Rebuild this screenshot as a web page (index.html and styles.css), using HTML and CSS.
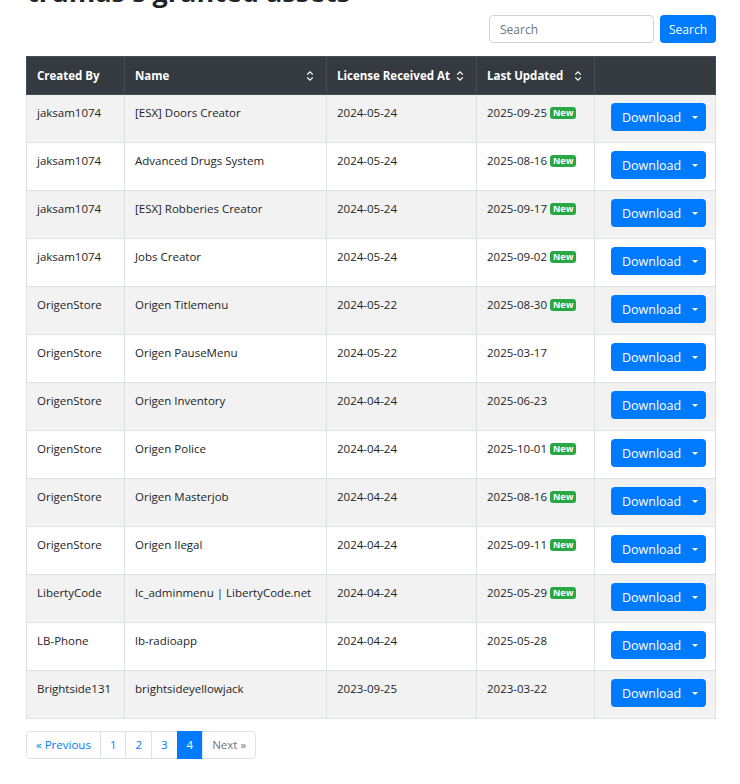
FILE: index.html
```html
<!DOCTYPE html>
<html>
	<head>
		<title>Granted assets</title>
		<link rel="stylesheet" href="styles.css">
	</head>
	<body>
		<div id="page">
			<h2 class="title">trumas's granted assets</h2>
			<form class="toolbar">
				<input type="text" class="search-input" placeholder="Search">
				<button type="button" class="btn">Search</button>
			</form>
			<table class="assets">
				<thead>
					<tr>
						<th class="col-author">Created By</th>
						<th class="col-name sortable">Name</th>
						<th class="col-received sortable">License Received At</th>
						<th class="col-updated sortable">Last Updated</th>
						<th class="col-action"></th>
					</tr>
				</thead>
				<tbody id="rows"></tbody>
			</table>
			<ul class="pagination">
				<li><a href="#">&laquo; Previous</a></li>
				<li><a href="#">1</a></li>
				<li><a href="#">2</a></li>
				<li><a href="#">3</a></li>
				<li class="active"><a href="#">4</a></li>
				<li class="disabled"><a href="#">Next &raquo;</a></li>
			</ul>
		</div>
		<script>
			let assets = [
				["jaksam1074", "[ESX] Doors Creator", "2024-05-24", "2025-09-25", true],
				["jaksam1074", "Advanced Drugs System", "2024-05-24", "2025-08-16", true],
				["jaksam1074", "[ESX] Robberies Creator", "2024-05-24", "2025-09-17", true],
				["jaksam1074", "Jobs Creator", "2024-05-24", "2025-09-02", true],
				["OrigenStore", "Origen Titlemenu", "2024-05-22", "2025-08-30", true],
				["OrigenStore", "Origen PauseMenu", "2024-05-22", "2025-03-17", false],
				["OrigenStore", "Origen Inventory", "2024-04-24", "2025-06-23", false],
				["OrigenStore", "Origen Police", "2024-04-24", "2025-10-01", true],
				["OrigenStore", "Origen Masterjob", "2024-04-24", "2025-08-16", true],
				["OrigenStore", "Origen Ilegal", "2024-04-24", "2025-09-11", true],
				["LibertyCode", "lc_adminmenu | LibertyCode.net", "2024-04-24", "2025-05-29", true],
				["LB-Phone", "lb-radioapp", "2024-04-24", "2025-05-28", false],
				["Brightside131", "brightsideyellowjack", "2023-09-25", "2023-03-22", false]
			];

			let tbody = document.querySelector("#rows");
			for (let a of assets) {
				let tr = document.createElement("tr");
				let badge = a[4] ? ' <span class="badge">New</span>' : "";
				tr.innerHTML = `<td>${a[0]}</td><td>${a[1]}</td><td>${a[2]}</td><td>${a[3]}${badge}</td>` +
					`<td><div class="btn-group"><button class="btn">Download</button><button class="btn caret"></button></div></td>`;
				tbody.appendChild(tr);
			}
		</script>
	</body>
</html>
```

FILE: styles.css
```css
body {
	margin: 0;
	font-family: "Open Sans", "Noto Sans", sans-serif;
	font-size: 11.5px;
	color: #212529;
	background: #fff;
	overflow: hidden;
}

#page {
	width: 690px;
	padding-left: 26px;
}

.title {
	font-size: 27px;
	font-weight: 700;
	line-height: 38px;
	margin: -27px 0 0 1px;
	color: #212529;
}

.toolbar {
	display: flex;
	justify-content: flex-end;
	gap: 6px;
	margin: 4px 0 13px;
}

.search-input {
	width: 165px;
	height: 28px;
	box-sizing: border-box;
	border: 1px solid #ced4da;
	border-radius: 4px;
	padding: 0 10px;
	font: inherit;
	font-size: 12px;
	color: #495057;
}

.search-input::placeholder {
	color: #6c757d;
}

.btn {
	height: 28px;
	border: none;
	border-radius: 4px;
	background: #007bff;
	color: #fff;
	font: inherit;
	font-size: 12px;
	padding: 0 9px;
	cursor: pointer;
}

.assets {
	width: 690px;
	border-collapse: collapse;
	table-layout: fixed;
}

.assets th,
.assets td {
	border: 1px solid #dee2e6;
	padding: 0 10px;
	text-align: left;
	white-space: nowrap;
}

.assets th {
	height: 37px;
	background-color: #343a40;
	border-color: #454d55;
	color: #fff;
	font-weight: 700;
	vertical-align: middle;
}

.col-author { width: 77px; }
.col-name { width: 181px; }
.col-received { width: 129px; }
.col-updated { width: 97px; }

.assets th.sortable {
	background-image: url("data:image/svg+xml,%3Csvg xmlns='http://www.w3.org/2000/svg' width='8' height='12' viewBox='0 0 8 12'%3E%3Cpath d='M1.2 4.6 4 1.8 6.8 4.6M1.2 7.4 4 10.2 6.8 7.4' fill='none' stroke='%23fff' stroke-width='1.3'/%3E%3C/svg%3E");
	background-repeat: no-repeat;
	background-position: right 12px center;
}

.assets td {
	height: 38px;
	vertical-align: top;
	padding-top: 9px;
	line-height: 18px;
}

.assets tbody tr:nth-child(odd) td {
	background: #f2f2f2;
}

.assets td:last-child {
	padding: 8px 0 0 16px;
}

.badge {
	display: inline-block;
	background: #28a745;
	color: #fff;
	font-size: 9px;
	font-weight: 700;
	line-height: 12px;
	padding: 0 3px;
	border-radius: 3px;
	vertical-align: 1px;
}

.btn-group {
	display: inline-flex;
	border-radius: 4px;
	overflow: hidden;
}

.btn-group .btn {
	border-radius: 0;
	font-size: 12.5px;
	padding: 1px 0 0 11px;
	width: 73px;
	text-align: left;
}

.btn-group .caret {
	width: 22px;
	padding: 0;
	position: relative;
}

.caret::after {
	content: "";
	position: absolute;
	left: 8px;
	top: 13px;
	border-top: 3px solid #fff;
	border-left: 3px solid transparent;
	border-right: 3px solid transparent;
}

.pagination {
	display: flex;
	list-style: none;
	padding: 0;
	margin: 12px 0 0;
}

.pagination a {
	display: block;
	height: 26px;
	line-height: 26px;
	padding: 0 9px;
	border: 1px solid #dee2e6;
	margin-left: -1px;
	color: #007bff;
	text-decoration: none;
	font-size: 11.5px;
}

.pagination li:first-child a {
	margin-left: 0;
	border-radius: 4px 0 0 4px;
}

.pagination li:last-child a {
	border-radius: 0 4px 4px 0;
}

.pagination .active a {
	background: #007bff;
	border-color: #007bff;
	color: #fff;
}

.pagination .disabled a {
	color: #6c757d;
}
```
